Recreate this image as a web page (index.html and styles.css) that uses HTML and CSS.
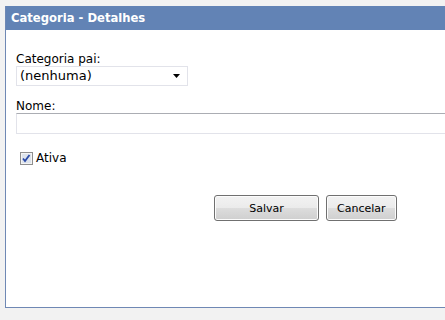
FILE: index.html
```html
<!DOCTYPE html>
<html lang="pt">
  <head>
    <meta charset="UTF-8">
    <title>Categoria - Detalhes</title>
    <link rel="stylesheet" href="styles.css">
  </head>
  <body>

    <section class="panel">
      <h1 class="panel-title">Categoria - Detalhes</h1>
      <form class="panel-body">
        <label class="field">
          <span>Categoria pai:</span>
          <span class="select">
            <span class="select-value">(nenhuma)</span>
            <svg class="select-arrow" width="7" height="4" viewBox="0 0 7 4"><path d="M0 0h7L3.5 4z" fill="#000"/></svg>
          </span>
        </label>
        <label class="field">
          <span>Nome:</span>
          <input class="text" type="text">
        </label>
        <label class="check">
          <span class="check-box">
            <svg width="13" height="13" viewBox="0 0 13 13">
              <rect x="0.5" y="0.5" width="12" height="12" fill="#f4f4f4" stroke="#8f8f8f"/>
              <rect x="2" y="2" width="9" height="9" fill="#dde3ec"/>
              <path d="M3 6.5l2 2.5 4.5-6" fill="none" stroke="#2a4aa8" stroke-width="1.8"/>
            </svg>
          </span>
          Ativa
        </label>
        <div class="actions">
          <button type="button" class="btn btn-wide">Salvar</button>
          <button type="button" class="btn">Cancelar</button>
        </div>
      </form>
    </section>

  </body>
</html>
```

FILE: styles.css
```css
:root {
  --clr-page:   #f2f2f2;
  --clr-header: #6283b5;
  --clr-frame:  #6f88b4;
  --clr-text:   #000;
  --clr-input:  #e2e3ea;
  --clr-input-top: #abadb3;
}

html, body {
  margin: 0;
  padding: 0;
  font: normal normal 13px/1.2 "DejaVu Sans", Verdana, sans-serif;
}

*, *::before, *::after {
  box-sizing: border-box;
}

body {
  width: 445px;
  height: 320px;
  overflow: hidden;
  padding: 6px 0 0 5px;
  background-color: var(--clr-page);
  color: var(--clr-text);
}

.panel {
  width: 460px;
  height: 302px;
  background: #fff;
  border-left: solid 1px var(--clr-frame);
  border-bottom: solid 1px var(--clr-frame);
}

.panel-title {
  margin: 0;
  height: 24px;
  padding: 0 0 0 5px;
  line-height: 24px;
  font-size: 11.6px;
  font-weight: bold;
  color: #fff;
  background-color: var(--clr-header);
}

.panel-body {
  display: flex;
  flex-direction: column;
  align-items: flex-start;
  padding: 22px 0 0 10px;
  font-size: 12px;
}

.field {
  display: flex;
  flex-direction: column;
  margin-bottom: 13px;
  line-height: 14px;
}

.select {
  display: flex;
  align-items: center;
  justify-content: space-between;
  width: 172px;
  height: 20px;
  padding: 0 7px 0 3px;
  border: solid 1px var(--clr-input);
  font-size: 13px;
}

.text {
  width: 440px;
  height: 21px;
  margin: 0;
  border: solid 1px var(--clr-input);
  border-top-color: var(--clr-input-top);
  background: #fff;
}

.check {
  display: flex;
  align-items: center;
  gap: 3px;
  padding: 4px 0 0 4px;
  font-size: 12px;
}

.check-box {
  display: flex;
}

.actions {
  display: flex;
  gap: 7px;
  margin: 30px 0 0 198px;
}

.btn {
  height: 26px;
  padding: 0 10px;
  font: inherit;
  font-size: 11px;
  color: #000;
  border: solid 1px #707070;
  border-radius: 3px;
  background: linear-gradient(#f2f2f2 0, #ebebeb 50%, #dddddd 50%, #cfcfcf 100%);
  box-shadow: inset 0 0 0 1px #fcfcfc;
}

.btn-wide {
  width: 105px;
}
```
